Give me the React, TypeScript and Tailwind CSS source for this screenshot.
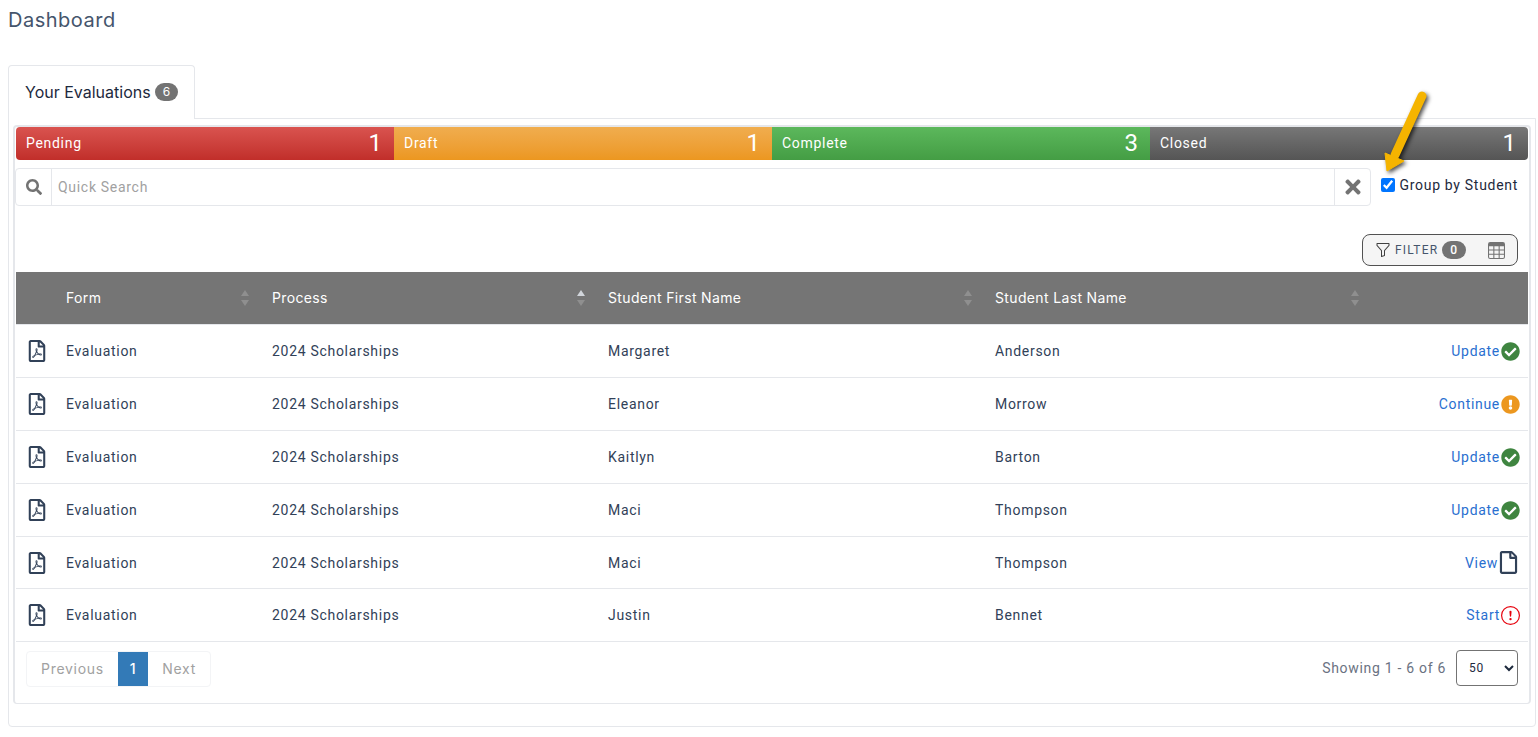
import { FaCheckCircle, FaExclamationCircle, FaRegFile, FaRegFilePdf, FaSearch, FaTimes } from "react-icons/fa";
import { BsExclamationCircle, BsFunnel, BsTable } from "react-icons/bs";

const STATUS = [
  { label: "Pending", count: 1, className: "from-[#d9534f] to-[#c12e2a] rounded-l" },
  { label: "Draft", count: 1, className: "from-[#f0ad4e] to-[#ec971f]" },
  { label: "Complete", count: 3, className: "from-[#5cb85c] to-[#449d44]" },
  { label: "Closed", count: 1, className: "from-[#777777] to-[#555555] rounded-r" },
];

const ROWS = [
  { first: "Margaret", last: "Anderson", action: "Update", status: "done" },
  { first: "Eleanor", last: "Morrow", action: "Continue", status: "draft" },
  { first: "Kaitlyn", last: "Barton", action: "Update", status: "done" },
  { first: "Maci", last: "Thompson", action: "Update", status: "done" },
  { first: "Maci", last: "Thompson", action: "View", status: "closed" },
  { first: "Justin", last: "Bennet", action: "Start", status: "pending" },
];

const COLUMNS = "grid grid-cols-[38px_206px_336px_387px_387px_1fr] items-center";

function SortIcon({ active }: { active?: boolean }) {
  return (
    <svg viewBox="0 0 10 18" className="h-4.5 w-2.5">
      <path d="M5 1 9 7H1z" fill={active ? "#d1d5db" : "#8f8f8f"} />
      <path d="M5 17 1 11h8z" fill="#8f8f8f" />
    </svg>
  );
}

function StatusIcon({ status }: { status: string }) {
  if (status === "done") return <FaCheckCircle size={19} className="text-[#3f8540]" />;
  if (status === "draft") return <FaExclamationCircle size={19} className="text-[#ec971f]" />;
  if (status === "pending") return <BsExclamationCircle size={19} className="text-red-600" />;
  return <FaRegFile size={23} className="-ml-0.5 text-slate-700" />;
}

function HeaderCell({ label, active }: { label: string; active?: boolean }) {
  return (
    <div className="flex items-center justify-between pl-3 pr-2.5">
      <span>{label}</span>
      <SortIcon active={active} />
    </div>
  );
}

export default function App() {
  return (
    <div className="min-h-screen bg-white pl-2 pr-0.5 font-[Roboto,sans-serif] text-sm tracking-wider text-slate-700">
      <h1 className="flex h-10 items-center font-[Inter,sans-serif] text-xl tracking-wide text-slate-600">Dashboard</h1>

      <div className="mt-6 flex pt-px">
        <div className="relative z-10 -mb-px flex h-13.5 items-center gap-1 rounded-t border border-b-0 border-gray-200 bg-white px-4 pb-0.5 font-[Inter,sans-serif] text-base tracking-normal text-slate-800">
          Your Evaluations
          <span className="rounded-full bg-neutral-500 px-2 text-xs leading-4.5 text-white">6</span>
        </div>
      </div>

      <div className="rounded-b border border-gray-200 pb-5.5 pl-1 pr-1 pt-1.5">
        <div className="relative rounded border-2 border-b border-gray-200 px-px pb-4">
          <div className="flex text-white">
            {STATUS.map((s) => (
              <div key={s.label} className={`flex flex-1 items-center justify-between bg-linear-to-b pb-px pl-2.5 pr-3 ${s.className}`}>
                <span>{s.label}</span>
                <span className="text-2xl leading-8 tracking-normal">{s.count}</span>
              </div>
            ))}
          </div>

          <svg viewBox="0 0 56 96" className="absolute -top-9 right-24 h-24 w-14 drop-shadow-[2px_2px_2px_rgba(0,0,0,0.7)]">
            <path d="M45 5 18 64" stroke="#f5b400" strokeWidth="9" strokeLinecap="round" fill="none" />
            <path d="M10 80 8 62 27 70z" fill="#f5b400" stroke="#f5b400" strokeWidth="1" strokeLinejoin="round" />
          </svg>

          <div className="mt-2 flex items-start">
            <div className="-ml-px flex flex-1 rounded border border-gray-200">
              <div className="flex h-9 w-9 items-center justify-center border-r border-gray-200 text-neutral-500">
                <FaSearch size={16} />
              </div>
              <input placeholder="Quick Search" className="flex-1 pl-1.5 outline-none placeholder:text-neutral-400" />
              <div className="flex h-9 w-9 items-center justify-center border-l border-gray-200 text-neutral-500">
                <FaTimes size={22} />
              </div>
            </div>
            <label className="flex items-center gap-1 pl-2.5 pr-2.5 pt-2 leading-4.5 text-slate-800">
              <input type="checkbox" defaultChecked className="size-3.5" />
              Group by Student
            </label>
          </div>

          <div className="mt-7 flex justify-end pr-2.5">
            <div className="flex h-8 w-39 items-center justify-between rounded-lg border border-neutral-600 bg-neutral-100 pl-3 pr-3">
              <div className="flex items-center gap-1">
                <BsFunnel size={16} className="text-neutral-700" />
                <span className="text-xs tracking-widest text-slate-600">FILTER</span>
                <span className="rounded-full bg-neutral-500 px-2 text-xs font-medium leading-4.5 text-white">0</span>
              </div>
              <BsTable size={17} className="text-neutral-500" />
            </div>
          </div>

          <div className="mt-1.5">
            <div className={`${COLUMNS} border-b border-gray-200 bg-[#757575] py-4 font-[Inter,sans-serif] leading-5 tracking-wide text-white`}>
              <div />
              <HeaderCell label="Form" />
              <HeaderCell label="Process" active />
              <HeaderCell label="Student First Name" />
              <HeaderCell label="Student Last Name" />
              <div />
            </div>
            {ROWS.map((r, i) => (
              <div key={i} className={`${COLUMNS} border-b border-gray-200 ${r.status === "closed" ? "h-13" : "py-4 leading-5"}`}>
                <div className="-my-1 pl-2.5">
                  <FaRegFilePdf size={22} />
                </div>
                <div className="px-3">Evaluation</div>
                <div className="px-3">2024 Scholarships</div>
                <div className="px-3">{r.first}</div>
                <div className="px-3">{r.last}</div>
                <div className="flex items-center justify-end gap-px pr-2">
                  <a className="text-[#2a6fd0]">{r.action}</a>
                  <span className="-my-1">
                    <StatusIcon status={r.status} />
                  </span>
                </div>
              </div>
            ))}
          </div>

          <div className="mt-2 flex items-start justify-between px-2.5">
            <div className="mt-px flex h-9 items-stretch rounded border border-gray-100 font-[Inter,sans-serif] text-neutral-400">
              <span className="flex items-center px-3.5">Previous</span>
              <span className="flex items-center bg-[#337ab7] px-3 font-medium text-white">1</span>
              <span className="flex items-center px-3.5">Next</span>
            </div>
            <div className="flex items-center gap-2.5 text-gray-500">
              <span>Showing 1 - 6 of 6</span>
              <select className="h-9 w-15.5 rounded border border-neutral-500 pl-2 text-xs text-slate-800">
                <option>50</option>
              </select>
            </div>
          </div>
        </div>
      </div>
    </div>
  );
}
